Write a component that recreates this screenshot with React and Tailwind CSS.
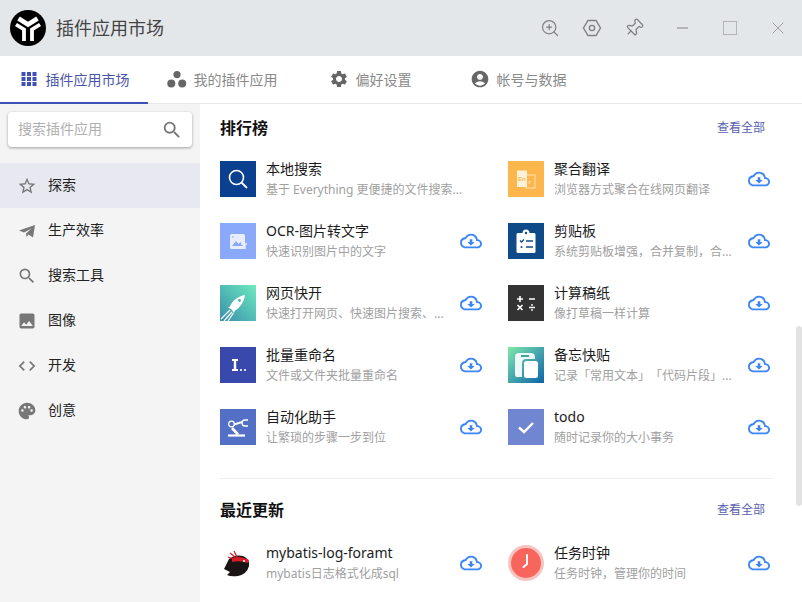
import React from 'react';
import { ZoomIn, Pin } from 'lucide-react';
import {
  MdSettings,
  MdAccountCircle,
  MdStarBorder,
  MdSearch,
  MdImage,
  MdCode,
  MdPalette,
  MdOutlineCloudDownload,
} from 'react-icons/md';

const FONT = "font-['Noto_Sans','Noto_Sans_CJK_SC',sans-serif]";

const Logo = () => (
  <svg width="36" height="36" viewBox="0 0 36 36">
    <circle cx="18" cy="18" r="18" fill="#000" />
    <path d="M8.5 8.5 L18 14.5 L27.5 8.5" fill="none" stroke="#fff" strokeWidth="4.6" />
    <path d="M6 14.5 L14 19.5 V31" fill="none" stroke="#fff" strokeWidth="3.8" />
    <path d="M30 14.5 L22 19.5 V31" fill="none" stroke="#fff" strokeWidth="3.8" />
  </svg>
);

const GridIcon = ({ className }) => (
  <svg className={className} width="20" height="20" viewBox="0 0 20 20" fill="currentColor">
    <rect x="2.5" y="3" width="4" height="4" />
    <rect x="8" y="3" width="4" height="4" />
    <rect x="13.5" y="3" width="4" height="4" />
    <rect x="2.5" y="8" width="4" height="4" />
    <rect x="8" y="8" width="4" height="4" />
    <rect x="13.5" y="8" width="4" height="4" />
    <rect x="2.5" y="13" width="4" height="4" />
    <rect x="8" y="13" width="4" height="4" />
    <rect x="13.5" y="13" width="4" height="4" />
  </svg>
);

const BubblesIcon = ({ className }) => (
  <svg className={className} width="20" height="20" viewBox="0 0 20 20" fill="currentColor">
    <circle cx="10" cy="5.6" r="3.6" />
    <circle cx="4.3" cy="14.4" r="4" />
    <circle cx="15.2" cy="14.4" r="4" />
  </svg>
);

const PlaneIcon = ({ className }) => (
  <svg className={className} width="20" height="20" viewBox="0 0 20 20" fill="currentColor">
    <path d="M2 9.5 L18 4 L16 16.5 L11.5 13.5 L9.5 16 L9 12.5 L14.5 7.5 L7 11.5 Z" />
  </svg>
);

const IconBox = ({ className, children }) => (
  <div className={`w-9 h-9 shrink-0 flex items-center justify-center overflow-hidden ${className}`}>
    <svg width="36" height="36" viewBox="0 0 36 36">{children}</svg>
  </div>
);

const icons = {
  search: (
    <IconBox className="bg-[#0b3f8f]">
      <circle cx="16.5" cy="16.5" r="7" fill="none" stroke="#fff" strokeWidth="1.6" />
      <path d="M21.5 21.5 L27 27" stroke="#fff" strokeWidth="1.8" />
    </IconBox>
  ),
  translate: (
    <IconBox className="bg-[#fdb64c]">
      <rect x="18" y="14" width="9" height="13" fill="none" stroke="#ffe3b4" strokeWidth="1" />
      <rect x="9" y="9.5" width="10" height="16.5" fill="#fff1d8" />
      <text x="10" y="20" fontSize="6" fontWeight="700" fill="#fdb64c" fontFamily="Liberation Sans">En</text>
      <text x="20" y="23" fontSize="6" fill="#ffe3b4" fontFamily="Liberation Sans">z</text>
    </IconBox>
  ),
  ocr: (
    <IconBox className="bg-[#8aa9fb]">
      <rect x="10" y="11" width="15" height="15" rx="1.5" fill="#e8eeff" />
      <path d="M12 23 L16 18 L18.5 21 L20.5 19 L23 23 Z" fill="#8aa9fb" />
      <circle cx="13" cy="14" r="0.8" fill="#8aa9fb" />
      <path d="M21 21 H27 M25 21 V26" stroke="#e8eeff" strokeWidth="1.4" />
    </IconBox>
  ),
  clipboard: (
    <IconBox className="bg-[#0f4a88]">
      <path d="M10 10 H14.5 A3.5 3.5 0 0 1 21.5 10 H26 A1.5 1.5 0 0 1 27.5 11.5 V28.5 A1.5 1.5 0 0 1 26 30 H10 A1.5 1.5 0 0 1 8.5 28.5 V11.5 A1.5 1.5 0 0 1 10 10 Z" fill="#fff" />
      <circle cx="18" cy="10" r="1.2" fill="#0f4a88" />
      <path d="M12 17.5 L13.5 19 L16 16.5 M18 18 H25 M18 24 H25" stroke="#0f4a88" strokeWidth="1.3" fill="none" />
      <circle cx="13.5" cy="24" r="1" fill="#0f4a88" />
    </IconBox>
  ),
  rocket: (
    <IconBox className="bg-gradient-to-tr from-[#3a8fa8] to-[#6eeac0]">
      <path d="M25 10 C18 11 12 16 10 21.5 L8 22.5 L11 24 L13 26.5 L14 28 L15 25.5 C20 23 24 17 25 10 Z" fill="#fff" />
      <circle cx="19.5" cy="15.5" r="1.4" fill="#4fb3ae" />
      <path d="M10 25 L1 34 M12 27 L4 36 M13.5 28 L8 36" stroke="#fff" strokeWidth="1.2" />
    </IconBox>
  ),
  calc: (
    <IconBox className="bg-[#333333]">
      <path d="M9 14 H15 M12 11 V17 M21 14 H27 M9.5 20 L14.5 25 M14.5 20 L9.5 25 M21 22.5 H27" stroke="#fff" strokeWidth="1.6" />
      <circle cx="24" cy="20" r="0.9" fill="#fff" />
      <circle cx="24" cy="25" r="0.9" fill="#fff" />
    </IconBox>
  ),
  rename: (
    <IconBox className="bg-[#3949ab]">
      <path d="M12 12 H18 V14 H16.2 V22 H18 V24 H12 V22 H13.8 V14 H12 Z" fill="#fff" />
      <circle cx="21" cy="23" r="1.1" fill="#fff" />
      <circle cx="25" cy="23" r="1.1" fill="#fff" />
    </IconBox>
  ),
  memo: (
    <IconBox className="bg-gradient-to-br from-[#7ee8a8] to-[#0d63a5]">
      <path d="M7 30 V10 Q7 6 11 6 H23 Q27 6 27 10 V12 H18 Q14 12 14 16 V30 H9 Q7 30 7 28 Z" fill="#fff" fillOpacity="0.9" />
      <rect x="16" y="14" width="14" height="17" rx="2.5" fill="#fff" />
      <rect x="13" y="8" width="8" height="2" fill="#3fa79c" />
    </IconBox>
  ),
  robot: (
    <IconBox className="bg-[#5470c6]">
      <path d="M8 26.5 H25" stroke="#fff" strokeWidth="2.2" />
      <path d="M18 25.5 L12 19" stroke="#fff" strokeWidth="2.6" fill="none" />
      <circle cx="11.5" cy="15" r="2.8" fill="none" stroke="#fff" strokeWidth="1.2" />
      <path d="M14 15.5 L22 13" stroke="#fff" strokeWidth="2.2" fill="none" />
      <path d="M28 11 H25 Q22 11 22 14 Q22 17 25 17 H28" stroke="#fff" strokeWidth="1.4" fill="none" />
    </IconBox>
  ),
  todo: (
    <IconBox className="bg-[#7186d0]">
      <path d="M11 18.5 L16 23 L25 14" stroke="#fff" strokeWidth="2.4" fill="none" />
    </IconBox>
  ),
  mybatis: (
    <IconBox className="bg-white">
      <path d="M4 24 L9 14 Q15 9 23 11 Q30 14 29 21 Q27 29 18 31 Q11 32 7 30 L10 27 Z" fill="#1b1414" />
      <path d="M12 13 Q20 10 29 15 L28 18 Q19 15 12 17 Z" fill="#d81e2c" />
      <path d="M10 8 L15 12 M14 6 L17 12 M8 12 L13 14" stroke="#d81e2c" strokeWidth="1.3" />
      <circle cx="24" cy="16" r="1" fill="#fff" />
    </IconBox>
  ),
  clock: (
    <IconBox className="bg-white">
      <circle cx="18" cy="18" r="18" fill="#f8c4c0" />
      <circle cx="18" cy="18" r="15" fill="#f8655c" />
      <path d="M19 10 V19 L15.5 22" stroke="#fff" strokeWidth="2" fill="none" strokeLinecap="round" />
    </IconBox>
  ),
};

const ranking = [
  { name: '本地搜索', desc: '基于 Everything 更便捷的文件搜索...', icon: 'search', installed: true },
  { name: '聚合翻译', desc: '浏览器方式聚合在线网页翻译', icon: 'translate' },
  { name: 'OCR-图片转文字', desc: '快速识别图片中的文字', icon: 'ocr' },
  { name: '剪贴板', desc: '系统剪贴板增强，合并复制，合...', icon: 'clipboard' },
  { name: '网页快开', desc: '快速打开网页、快速图片搜索、...', icon: 'rocket' },
  { name: '计算稿纸', desc: '像打草稿一样计算', icon: 'calc' },
  { name: '批量重命名', desc: '文件或文件夹批量重命名', icon: 'rename' },
  { name: '备忘快贴', desc: '记录「常用文本」「代码片段」...', icon: 'memo' },
  { name: '自动化助手', desc: '让繁琐的步骤一步到位', icon: 'robot' },
  { name: 'todo', desc: '随时记录你的大小事务', icon: 'todo' },
];

const recent = [
  { name: 'mybatis-log-foramt', desc: 'mybatis日志格式化成sql', icon: 'mybatis' },
  { name: '任务时钟', desc: '任务时钟，管理你的时间', icon: 'clock' },
];

const tabs = [
  { label: '插件应用市场', Icon: GridIcon, active: true },
  { label: '我的插件应用', Icon: BubblesIcon },
  { label: '偏好设置', Icon: MdSettings },
  { label: '帐号与数据', Icon: MdAccountCircle },
];

const nav = [
  { label: '探索', Icon: MdStarBorder, active: true },
  { label: '生产效率', Icon: PlaneIcon },
  { label: '搜索工具', Icon: MdSearch },
  { label: '图像', Icon: MdImage },
  { label: '开发', Icon: MdCode },
  { label: '创意', Icon: MdPalette },
];

const PluginRow = ({ item }) => (
  <div className="flex items-center h-[62px]">
    {icons[item.icon]}
    <div className="ml-[10px] w-[194px] shrink-0">
      <div className="text-[14px] leading-[20px] text-[#1c1c1c] whitespace-nowrap">{item.name}</div>
      <div className="mt-[2px] text-[12px] leading-[18px] text-[#a0a0a0] whitespace-nowrap [text-spacing-trim:space-all]">{item.desc}</div>
    </div>
    {!item.installed && (
      <MdOutlineCloudDownload className="text-[#3b86f6]" size={22} />
    )}
  </div>
);

const SectionHead = ({ title }) => (
  <div className="flex items-center justify-between pr-[8px] h-[24px]">
    <span className="text-[16px] font-bold text-[#111]">{title}</span>
    <span className="text-[12px] text-[#5a5fb0] pr-[1px]">查看全部</span>
  </div>
);

const App = () => {
  return (
    <div className={`relative w-[802px] h-[602px] flex flex-col overflow-hidden bg-white ${FONT}`}>
      <header className="h-[56px] shrink-0 flex items-center bg-[#e4e7ea] pl-[10px]">
        <Logo />
        <span className="ml-[10px] text-[18px] text-[#444]">插件应用市场</span>
        <div className="ml-auto flex items-center text-[#808080]">
          <ZoomIn size={20} strokeWidth={1.5} />
          <svg className="ml-[22px]" width="20" height="20" viewBox="0 0 20 20" fill="none" stroke="currentColor" strokeWidth="1.4">
            <path d="M6 2.5 H14 L18.5 10 L14 17.5 H6 L1.5 10 Z" />
            <circle cx="10" cy="10" r="2.6" />
          </svg>
          <Pin className="ml-[22px] rotate-45" size={20} strokeWidth={1.5} />
          <div className="ml-[33px] w-[11px] h-[1.5px] bg-[#b4b4b4]" />
          <div className="ml-[35px] w-[14px] h-[14px] border border-[#b4b4b4]" />
          <svg className="ml-[34px] mr-[17px]" width="14" height="14" viewBox="0 0 14 14" stroke="#a0a0a0" strokeWidth="1">
            <path d="M1.5 1.5 L12.5 12.5 M12.5 1.5 L1.5 12.5" />
          </svg>
        </div>
      </header>

      <nav className="h-[48px] shrink-0 flex border-b border-[#e8e8e8]">
        {tabs.map(({ label, Icon, active }) => (
          <div
            key={label}
            className={`w-[148px] flex items-center justify-center gap-[7px] text-[14px] border-b-2 -mb-px ${
              active ? 'border-[#3f51b5] text-[#4a55a8]' : 'border-transparent text-[#8a8a8a]'
            }`}
          >
            <Icon size={20} className={active ? 'text-[#3f51b5]' : 'text-[#666]'} />
            <span>{label}</span>
          </div>
        ))}
      </nav>

      <div className="flex flex-1 min-h-0">
        <aside className="w-[200px] shrink-0 bg-[#f4f4f4] pt-[8px]">
          <div className="mx-[8px] h-[35px] flex items-center justify-between px-[10px] pr-[9px] bg-white rounded-[4px] shadow-[0_1px_3px_rgba(0,0,0,0.35)]">
            <span className="text-[14px] text-[#b0b0b0] pb-[2px]">搜索插件应用</span>
            <MdSearch size={22} className="text-[#777]" />
          </div>
          <div className="mt-[16px]">
            {nav.map(({ label, Icon, active }) => (
              <div
                key={label}
                className={`h-[45px] flex items-center pl-[17px] ${active ? 'bg-[#e7e8f0]' : ''}`}
              >
                <Icon size={20} className="text-[#777]" />
                <span className="ml-[11px] text-[14px] text-[#222] pb-[2px]">{label}</span>
              </div>
            ))}
          </div>
        </aside>

        <main className="flex-1 min-w-0 overflow-hidden pl-[20px] pr-[28px] pt-[12px]">
          <SectionHead title="排行榜" />
          <div className="mt-[8px] grid grid-cols-[288px_1fr]">
            {ranking.map((item) => (
              <PluginRow key={item.name} item={item} />
            ))}
          </div>
          <div className="mt-[20px] border-t border-[#eeeeee]" />
          <div className="mt-[19px]">
            <SectionHead title="最近更新" />
          </div>
          <div className="mt-[10px] grid grid-cols-[288px_1fr]">
            {recent.map((item) => (
              <PluginRow key={item.name} item={item} />
            ))}
          </div>
        </main>
      </div>

      <div className="absolute right-0 top-[326px] w-[6px] h-[180px] bg-[#e2e2e2] rounded-[3px]" />
    </div>
  );
};

export default App;
